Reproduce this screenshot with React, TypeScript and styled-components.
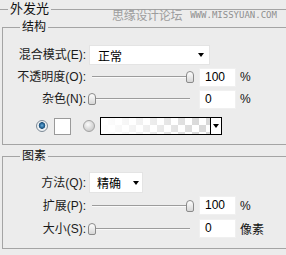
import React from 'react';
import styled, { createGlobalStyle } from 'styled-components';

const GlobalStyle = createGlobalStyle`
  html, body {
    margin: 0;
    padding: 0;
    background: #ececec;
    overflow: hidden;
  }
  body {
    font-family: "Liberation Sans", "Noto Sans CJK SC", sans-serif;
    font-size: 12px;
    color: #1a1a1a;
  }
`;

const Panel = styled.div`
  position: relative;
  width: 286px;
  height: 255px;
  overflow: hidden;
`;

const OuterGroup = styled.fieldset`
  margin: 0 -40px 0 -6px;
  min-width: 0;
  padding: 1px 0 0 7px;
  border: 1px solid #a4a4a4;
  border-bottom: none;
`;

const OuterLegend = styled.legend`
  margin-left: 6px;
  padding: 0 2px;
  font-size: 13px;
  line-height: 18px;
  color: #111;
`;

const Group = styled.fieldset<{ $top?: number; $pt?: number }>`
  margin: ${(p) => p.$top ?? 0}px 0 0 0;
  min-width: 0;
  padding: ${(p) => p.$pt ?? 10}px 0 9px 0;
  border: 1px solid #a4a4a4;
`;

const GroupLegend = styled.legend`
  margin-left: 17px;
  padding: 0 2px;
  font-size: 12px;
  line-height: 16px;
  color: #111;
`;

const Rows = styled.div<{ $gap: number }>`
  display: flex;
  flex-direction: column;
  gap: ${(p) => p.$gap}px;
`;

const Row = styled.div<{ $h: number }>`
  display: flex;
  align-items: center;
  height: ${(p) => p.$h}px;
`;

const Label = styled.div`
  width: 83px;
  margin-right: 3px;
  flex-shrink: 0;
  text-align: right;
  white-space: nowrap;
  line-height: 14px;
`;

const Select = styled.div<{ $w: number; $pl: number; $pr: number }>`
  display: flex;
  align-items: center;
  justify-content: space-between;
  box-sizing: border-box;
  width: ${(p) => p.$w}px;
  height: 100%;
  padding: 0 ${(p) => p.$pr}px 0 ${(p) => p.$pl}px;
  background: #fff;
  border: 1px solid #e4e4e4;
  color: #000;
`;

const Caret = styled.span`
  width: 0;
  height: 0;
  border-left: 3px solid transparent;
  border-right: 3px solid transparent;
  border-top: 4px solid #000;
`;

const Slider = styled.div<{ $end?: boolean }>`
  display: flex;
  align-items: center;
  justify-content: ${(p) => (p.$end ? 'flex-end' : 'flex-start')};
  box-sizing: border-box;
  width: 107px;
  height: 20px;
  margin-left: -1px;
  padding-right: 1px;
  background:
    linear-gradient(#9c9c9c, #9c9c9c) no-repeat 4px 9px / 98px 1px,
    linear-gradient(#fafafa, #fafafa) no-repeat 4px 10px / 98px 1px;
`;

const Thumb = styled.span`
  box-sizing: border-box;
  width: 8px;
  height: 12px;
  border: 1px solid #8a8a8a;
  border-radius: 4px 4px 2px 2px;
  background: linear-gradient(#fefefe, #d6d6d6);
`;

const NumberBox = styled.div`
  box-sizing: border-box;
  width: 37px;
  height: 19px;
  margin-left: 4px;
  padding-left: 5px;
  background: #fff;
  border: 1px solid #f0f0f0;
  line-height: 17px;
  color: #000;
`;

const Unit = styled.span`
  margin-left: 4px;
  font-size: 12px;
  color: #111;
`;

const ColorRow = styled.div`
  display: flex;
  align-items: center;
  height: 18px;
  margin-top: 8px;
  padding-left: 33px;
`;

const Radio = styled.span<{ $on?: boolean; $ml?: number }>`
  box-sizing: border-box;
  width: 12px;
  height: 12px;
  margin-left: ${(p) => p.$ml ?? 0}px;
  border-radius: 50%;
  border: 1px solid ${(p) => (p.$on ? '#7d8a96' : '#a2a2a2')};
  background: ${(p) =>
    p.$on
      ? 'radial-gradient(circle at 50% 45%, #6fb0dc 0, #2a6c9e 2px, #1c4f78 3px, #e9eef2 3.6px, #f6f6f6 100%)'
      : 'radial-gradient(circle at 40% 35%, #fbfbfb 0, #dedede 45%, #bdbdbd 100%)'};
`;

const Swatch = styled.span`
  box-sizing: border-box;
  width: 17px;
  height: 17px;
  margin-left: 6px;
  background: #fff;
  border: 1px solid #9a9a9a;
`;

const GradientBox = styled.div`
  display: flex;
  box-sizing: border-box;
  width: 122px;
  height: 18px;
  margin-left: 5px;
  border: 1px solid #000;
`;

const GradientFill = styled.div`
  flex: 1;
  background:
    linear-gradient(to right, #fff 0%, rgba(255, 255, 255, 0.6) 40%, rgba(255, 255, 255, 0) 90%),
    repeating-conic-gradient(#d9d9d9 0 25%, #ffffff 0 50%) 0 0 / 14px 14px;
`;

const GradientArrow = styled.div`
  display: flex;
  align-items: center;
  justify-content: center;
  width: 10px;
  background: #fff;
  border-left: 1px solid #000;
`;

const Watermark = styled.div`
  position: absolute;
  top: 8px;
  left: 112px;
  display: flex;
  align-items: center;
  gap: 8px;
  height: 14px;
  color: #9d9d9d;
`;

const WatermarkCn = styled.span`
  font-family: "Noto Sans CJK SC", sans-serif;
  font-size: 12px;
  line-height: 14px;
  letter-spacing: -0.3px;
`;

const WatermarkUrl = styled.span`
  font-family: "DejaVu Sans Mono", monospace;
  font-size: 9px;
  line-height: 14px;
  color: #8f8f8f;
`;

type SliderRowProps = { label: string; value: string; unit: string; full?: boolean; h: number };

const SliderRow = ({ label, value, unit, full, h }: SliderRowProps) => (
  <Row $h={h}>
    <Label>{label}</Label>
    <Slider $end={full}>
      <Thumb />
    </Slider>
    <NumberBox>{value}</NumberBox>
    <Unit>{unit}</Unit>
  </Row>
);

export default function App() {
  return (
    <>
      <GlobalStyle />
      <Panel>
        <OuterGroup>
          <OuterLegend>外发光</OuterLegend>
          <Group>
            <GroupLegend>结构</GroupLegend>
            <Rows $gap={2}>
              <Row $h={20}>
                <Label>混合模式(E):</Label>
                <Select $w={121} $pl={8} $pr={5}>
                  <span>正常</span>
                  <Caret />
                </Select>
              </Row>
              <SliderRow h={20} label="不透明度(O):" value="100" unit="%" full />
              <SliderRow h={20} label="杂色(N):" value="0" unit="%" />
            </Rows>
            <ColorRow>
              <Radio $on />
              <Swatch />
              <Radio $ml={12} />
              <GradientBox>
                <GradientFill />
                <GradientArrow>
                  <Caret />
                </GradientArrow>
              </GradientBox>
            </ColorRow>
          </Group>
          <Group $top={3} $pt={8}>
            <GroupLegend>图素</GroupLegend>
            <Rows $gap={2}>
              <Row $h={21}>
                <Label>方法(Q):</Label>
                <Select $w={54} $pl={7} $pr={3}>
                  <span>精确</span>
                  <Caret />
                </Select>
              </Row>
              <SliderRow h={21} label="扩展(P):" value="100" unit="%" full />
              <SliderRow h={21} label="大小(S):" value="0" unit="像素" />
            </Rows>
          </Group>
        </OuterGroup>
        <Watermark>
          <WatermarkCn>思缘设计论坛</WatermarkCn>
          <WatermarkUrl>WWW.MISSYUAN.COM</WatermarkUrl>
        </Watermark>
      </Panel>
    </>
  );
}
